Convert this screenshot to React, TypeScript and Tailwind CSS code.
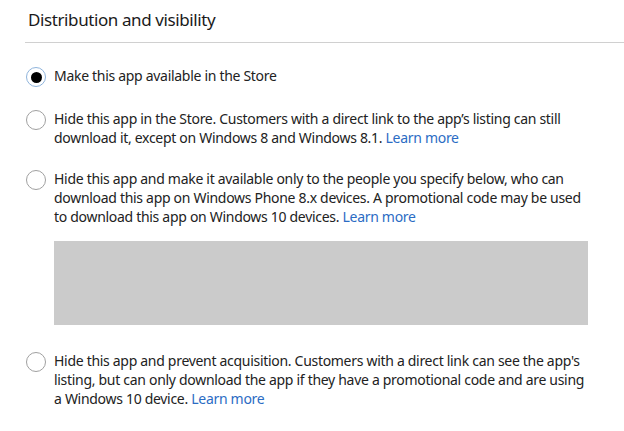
import React from "react";

const LINK = "text-[#2b6cc4]";

function Radio({ checked }: { checked?: boolean }) {
  return checked ? (
    <span className="mt-[1px] flex h-[20px] w-[20px] shrink-0 items-center justify-center rounded-full border border-[#8fb4dc] bg-white">
      <span className="h-[11px] w-[11px] rounded-full bg-black" />
    </span>
  ) : (
    <span className="mt-[1px] h-[20px] w-[20px] shrink-0 rounded-full border border-[#a0a0a0] bg-white" />
  );
}

function Option({ checked, children }: { checked?: boolean; children: React.ReactNode }) {
  return (
    <div className="flex items-start gap-[8px] pl-[26px]">
      <Radio checked={checked} />
      <p className="text-[14px] leading-[19px] tracking-[-0.3px] text-[#222]">{children}</p>
    </div>
  );
}

export default function App() {
  return (
    <div className="h-[431px] w-[624px] overflow-hidden bg-white font-['Noto_Sans',sans-serif]">
      <div className="ml-[25px] border-b border-[#d0d0d0] pl-[3px] pt-[8px] pb-[10px]">
        <h1 className="text-[17px] leading-[24px] font-normal tracking-[-0.4px] text-[#1a1a1a]">Distribution and visibility</h1>
      </div>

      <div className="pt-[23px]">
        <Option checked>Make this app available in the Store</Option>
      </div>

      <div className="pt-[22px]">
        <Option>
          Hide this app in the Store. Customers with a direct link to the app’s listing can still
          <br />
          download it, except on Windows 8 and Windows 8.1. <span className={LINK}>Learn more</span>
        </Option>
      </div>

      <div className="pt-[22px]">
        <Option>
          Hide this app and make it available only to the people you specify below, who can
          <br />
          download this app on Windows Phone 8.x devices. A promotional code may be used
          <br />
          to download this app on Windows 10 devices. <span className={LINK}>Learn more</span>
        </Option>
      </div>

      <div className="ml-[54px] mr-[36px] mt-[15px] h-[84px] bg-[#cbcbcb]" />

      <div className="pt-[26px]">
        <Option>
          Hide this app and prevent acquisition. Customers with a direct link can see the app's
          <br />
          listing, but can only download the app if they have a promotional code and are using
          <br />
          a Windows 10 device. <span className={LINK}>Learn more</span>
        </Option>
      </div>
    </div>
  );
}
